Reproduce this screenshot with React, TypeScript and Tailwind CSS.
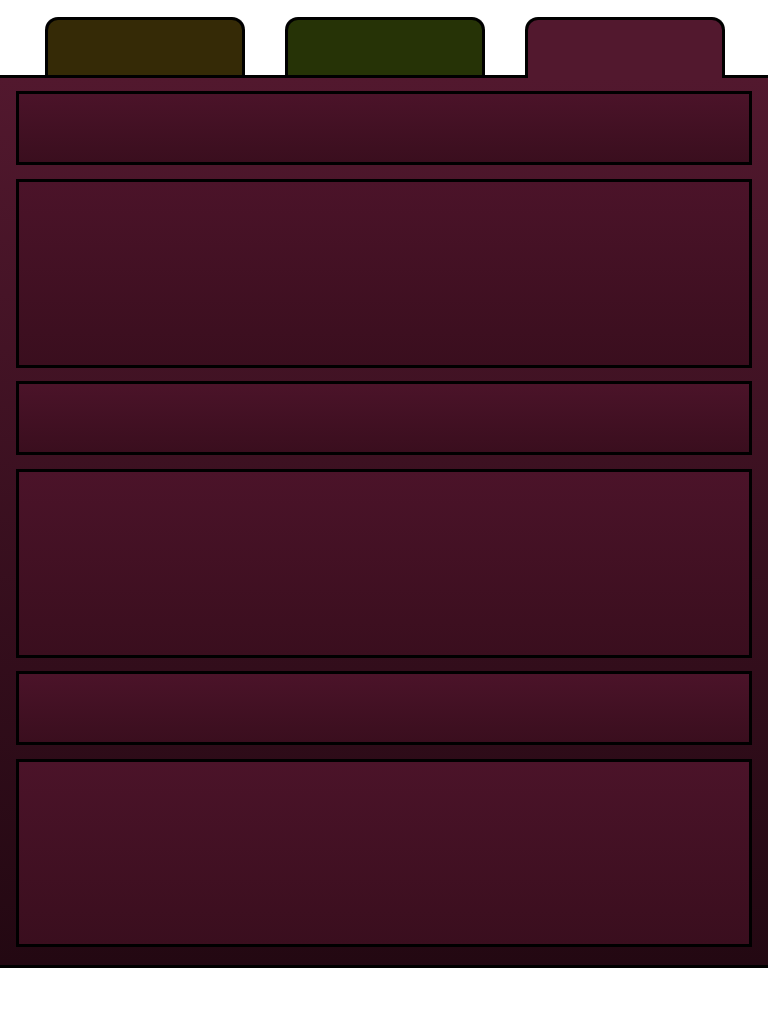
import React from 'react';

const tabs = [
  { id: 'one', bg: 'bg-[#352a06]', active: false },
  { id: 'two', bg: 'bg-[#263306]', active: false },
  { id: 'three', bg: 'bg-[#52182e]', active: true },
];

const boxes = [74, 189, 74, 189, 74, 188];

const App: React.FC = () => {
  return (
    <div className="w-[768px] min-h-[1024px] bg-white" style={{ fontFamily: '"Liberation Sans", sans-serif' }}>
      <div className="flex items-end gap-[40px] pl-[45px] pt-[17px]">
        {tabs.map(tab =>
          tab.active ? (
            <div
              key={tab.id}
              className={`relative z-10 -mb-[3px] h-[61px] w-[200px] rounded-t-[13px] border-[3px] border-b-0 border-black ${tab.bg}`}
            />
          ) : (
            <div
              key={tab.id}
              className={`h-[58px] w-[200px] rounded-t-[13px] border-[3px] border-b-0 border-black ${tab.bg}`}
            />
          )
        )}
      </div>
      <div className="flex flex-col gap-[13.6px] border-y-[3px] border-black bg-gradient-to-b from-[#52182e] to-[#230812] px-4 pt-[13px] pb-[18px]">
        {boxes.map((h, i) => (
          <div
            key={i}
            className="border-[3px] border-black bg-gradient-to-b from-[#4b1329] to-[#3a0e1e]"
            style={{ height: h }}
          />
        ))}
      </div>
    </div>
  );
};

export default App;
